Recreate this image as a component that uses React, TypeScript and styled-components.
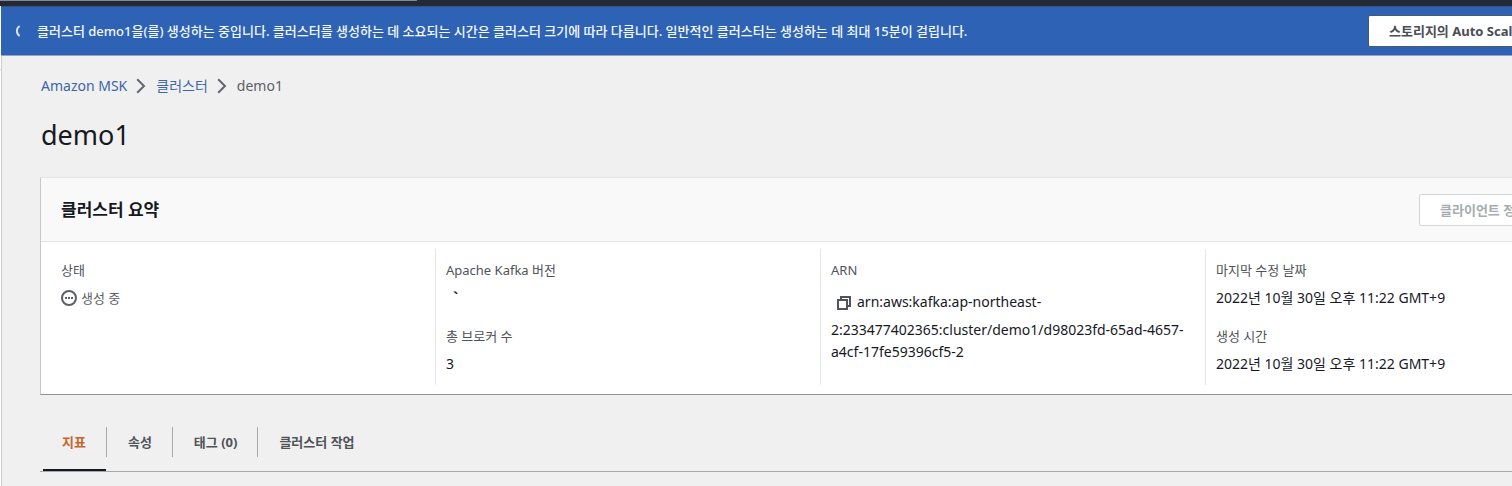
import React from "react";
import styled, { createGlobalStyle } from "styled-components";

const GlobalStyle = createGlobalStyle`
  *, *::before, *::after { box-sizing: border-box; }
  body {
    margin: 0;
    background: #f0f0f1;
    color: #16191f;
    font-family: "Noto Sans", "Noto Sans CJK KR", sans-serif;
    font-size: 13px;
    line-height: 22px;
  }
  button { font: inherit; cursor: pointer; }
`;

const Page = styled.div`
  display: flex;
  flex-direction: column;
  min-height: 100vh;
  overflow: hidden;
`;

const TopBar = styled.div`
  height: 6px;
  background: #222a38;
`;

const LoadProgress = styled.div`
  width: 28%;
  max-width: 417px;
  height: 1px;
  background: #85898c;
`;

const Body = styled.div`
  flex: 1;
  display: flex;
`;

const CollapsedNav = styled.div`
  flex: none;
  width: 1px;
  padding-top: 63px;
  background: #ffffff;

  &::before {
    content: "";
    display: block;
    height: 1px;
    background: #d5dbdb;
  }
`;

const Content = styled.div`
  flex: 1;
  min-width: 0;
`;

const Banner = styled.div`
  display: flex;
  align-items: center;
  width: calc(100% + 107px);
  min-height: 50px;
  padding: 0 0 0 12px;
  background: #2d62b5;
  border-top: 1px solid #3a5283;
  border-bottom: 1px solid #93a4bf;
  color: #f4f8fd;
`;

const BannerText = styled.p`
  flex: 1;
  margin: 0 0 0 8px;
  font-weight: 500;
`;

const Button = styled.button<{ $wide?: boolean }>`
  flex: none;
  height: 32px;
  min-width: ${(p) => (p.$wide ? 251 : 160)}px;
  padding: 0 20px;
  border: 1px solid #4c5767;
  border-radius: 2px;
  background: #ffffff;
  color: #494d54;
  font-weight: 700;
  text-align: left;
  white-space: nowrap;

  &:disabled {
    border-color: #d1d6d8;
    color: #a5adaf;
    cursor: default;
  }
`;

const Main = styled.main`
  width: calc(100% + 128px);
  min-height: calc(100% - 50px);
  padding: 19px 40px 0 38px;
  border-left: 1px solid #c9cdcf;
`;

const Crumbs = styled.ol`
  display: flex;
  align-items: center;
  margin: 0;
  padding: 0 0 0 1px;
  list-style: none;
  color: #5c6066;
  font-size: 14px;
`;

const Crumb = styled.li`
  display: flex;
  align-items: center;

  & > svg { margin: 0 10px 0 9px; }
`;

const CrumbLink = styled.a`
  color: #3c66a8;
  text-decoration: none;
`;

const Title = styled.h1`
  margin: 20px 0 24px;
  padding-left: 1px;
  font-size: 27px;
  font-weight: 400;
  line-height: 36px;
`;

const Panel = styled.section`
  background: #ffffff;
  border: 1px solid #e2e4e4;
  border-left-color: #c5c9ca;
  border-bottom-color: #8a918f;
`;

const PanelHeader = styled.header`
  display: flex;
  align-items: center;
  justify-content: space-between;
  height: 64px;
  padding: 0 20px;
  background: #f9f9fa;
  border-bottom: 1px solid #e5e6e7;
`;

const PanelTitle = styled.h2`
  margin: 0;
  font-size: 17px;
  font-weight: 700;
`;

const Columns = styled.div`
  display: grid;
  grid-template-columns: repeat(4, 1fr);
  padding: 7px 9px 9px;
`;

const Column = styled.dl`
  display: flex;
  flex-direction: column;
  gap: 16px;
  margin: 0;
  padding: 10px;
  border-left: 1px solid #e5e6e7;

  &:first-child { border-left-color: transparent; }
`;

const Label = styled.dt`
  margin-bottom: 6px;
  color: #505359;
`;

const Value = styled.dd<{ $muted?: boolean }>`
  min-height: 22px;
  margin: 0;
  font-size: ${(p) => (p.$muted ? 13 : 14)}px;
  color: ${(p) => (p.$muted ? "#5c6066" : "#16191f")};
`;

const Status = styled.span`
  display: flex;
  align-items: center;
  gap: 4px;
`;

const Mark = styled.span`
  padding-left: 7px;
  font-weight: 700;
`;

const CopyButton = styled.button`
  display: inline-flex;
  align-items: center;
  justify-content: flex-end;
  width: 26px;
  height: 32px;
  padding: 0 6px 0 0;
  border: 0;
  background: none;
  vertical-align: middle;
`;

const Tabs = styled.div`
  display: flex;
  height: 62px;
  margin-top: 15px;
  padding: 17px 0 0 1px;
  border-bottom: 1px solid #a3a9ab;
`;

const Tab = styled.button`
  position: relative;
  height: 30px;
  padding: 0 20px 0 21px;
  border: 0;
  border-right: 1px solid #a6abb0;
  background: none;
  color: #505359;
  font-weight: 700;

  &:last-child { border-right: 0; }

  &[aria-selected="true"] { color: #c9652d; }

  &[aria-selected="true"]::after {
    content: "";
    position: absolute;
    left: 2px;
    right: 0;
    bottom: -14px;
    height: 2px;
    background: #16191f;
  }
`;

const Chevron = () => (
  <svg width="10" height="16" viewBox="0 0 10 16" fill="none" stroke="#63676c" strokeWidth="2" aria-hidden="true">
    <path d="M1.2 1.2 L8 8 L1.2 14.8" />
  </svg>
);

const Spinner = () => (
  <svg width="16" height="16" viewBox="0 0 16 16" fill="none" stroke="#d6e3f7" strokeWidth="2" aria-hidden="true">
    <path d="M6.6 3 A6 6 0 0 0 6.6 13" />
  </svg>
);

const PendingIcon = () => (
  <svg width="16" height="16" viewBox="0 0 16 16" fill="none" stroke="#5c6066" strokeWidth="2" aria-hidden="true">
    <circle cx="8" cy="8" r="7" />
    <path d="M4 8h2M7 8h2M10 8h2" />
  </svg>
);

const CopyIcon = () => (
  <svg width="14" height="14" viewBox="0 0 14 14" fill="none" stroke="#505359" strokeWidth="2" aria-hidden="true">
    <path d="M1 4h9v9H1zM4 4V1h9v9h-3" />
  </svg>
);

type FieldProps = { label: string; muted?: boolean; children: React.ReactNode };

const Field = ({ label, muted, children }: FieldProps) => (
  <div>
    <Label>{label}</Label>
    <Value $muted={muted}>{children}</Value>
  </div>
);

const tabs = ["지표", "속성", "태그 (0)", "클러스터 작업"];

export default function App() {
  const [active, setActive] = React.useState(0);

  return (
    <Page>
      <GlobalStyle />
      <TopBar>
        <LoadProgress />
      </TopBar>
      <Body>
        <CollapsedNav />
        <Content>
          <Banner role="status">
            <Spinner />
            <BannerText>
              클러스터 demo1을(를) 생성하는 중입니다. 클러스터를 생성하는 데 소요되는 시간은 클러스터 크기에 따라
              다릅니다. 일반적인 클러스터는 생성하는 데 최대 15분이 걸립니다.
            </BannerText>
            <Button type="button" $wide>
              스토리지의 Auto Scaling 설정 편집
            </Button>
          </Banner>
          <Main>
            <nav aria-label="breadcrumb">
              <Crumbs>
                <Crumb>
                  <CrumbLink href="#msk">Amazon MSK</CrumbLink>
                  <Chevron />
                </Crumb>
                <Crumb>
                  <CrumbLink href="#clusters">클러스터</CrumbLink>
                  <Chevron />
                </Crumb>
                <Crumb aria-current="page">demo1</Crumb>
              </Crumbs>
            </nav>
            <Title>demo1</Title>
            <Panel>
              <PanelHeader>
                <PanelTitle>클러스터 요약</PanelTitle>
                <Button type="button" disabled>
                  클라이언트 정보 보기
                </Button>
              </PanelHeader>
              <Columns>
                <Column>
                  <Field label="상태" muted>
                    <Status>
                      <PendingIcon />
                      생성 중
                    </Status>
                  </Field>
                </Column>
                <Column>
                  <Field label="Apache Kafka 버전">
                    <Mark>`</Mark>
                  </Field>
                  <Field label="총 브로커 수">3</Field>
                </Column>
                <Column>
                  <Field label="ARN">
                    <CopyButton type="button" aria-label="ARN 복사">
                      <CopyIcon />
                    </CopyButton>
                    arn:aws:kafka:ap-northeast-
                    <wbr />
                    2:233477402365:cluster/demo1/d98023fd-65ad-4657-
                    <wbr />
                    a4cf-17fe59396cf5-2
                  </Field>
                </Column>
                <Column>
                  <Field label="마지막 수정 날짜">2022년 10월 30일 오후 11:22 GMT+9</Field>
                  <Field label="생성 시간">2022년 10월 30일 오후 11:22 GMT+9</Field>
                </Column>
              </Columns>
            </Panel>
            <Tabs role="tablist">
              {tabs.map((name, i) => (
                <Tab key={name} type="button" role="tab" aria-selected={i === active} onClick={() => setActive(i)}>
                  {name}
                </Tab>
              ))}
            </Tabs>
          </Main>
        </Content>
      </Body>
    </Page>
  );
}
